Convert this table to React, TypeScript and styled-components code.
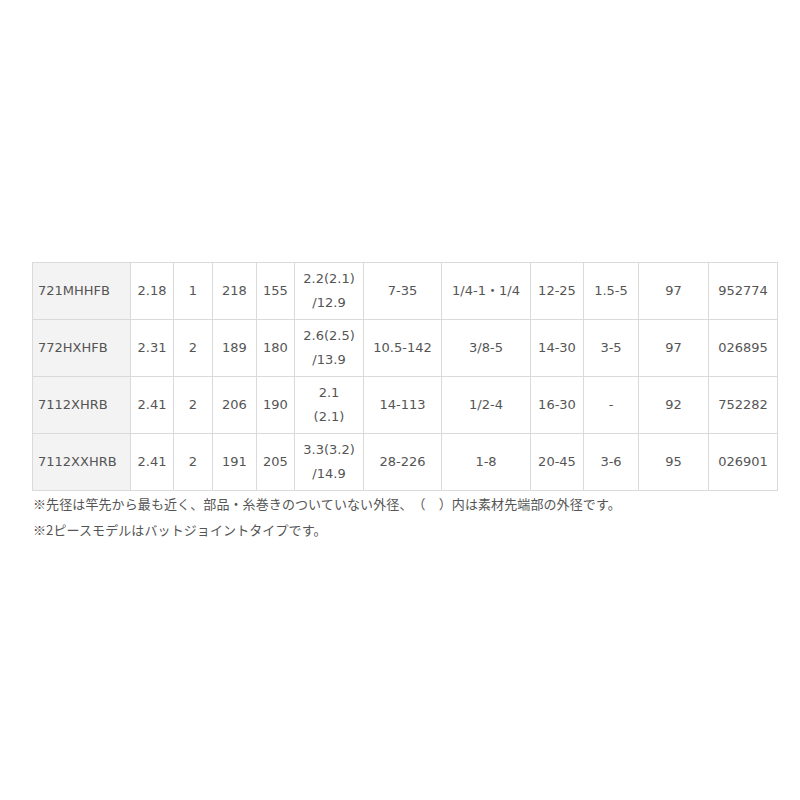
import React from 'react';
import styled, {createGlobalStyle} from 'styled-components';

type SpecRow = {
  model: string;
  cells: string[][];
};

const colWidths = [98, 43, 39, 44, 38, 69, 78, 89, 53, 55, 70, 69];

const rows: SpecRow[] = [
  {
    model: '721MHHFB',
    cells: [['2.18'], ['1'], ['218'], ['155'], ['2.2(2.1)', '/12.9'], ['7-35'], ['1/4-1・1/4'], ['12-25'], ['1.5-5'], ['97'], ['952774']],
  },
  {
    model: '772HXHFB',
    cells: [['2.31'], ['2'], ['189'], ['180'], ['2.6(2.5)', '/13.9'], ['10.5-142'], ['3/8-5'], ['14-30'], ['3-5'], ['97'], ['026895']],
  },
  {
    model: '7112XHRB',
    cells: [['2.41'], ['2'], ['206'], ['190'], ['2.1', '(2.1)'], ['14-113'], ['1/2-4'], ['16-30'], ['-'], ['92'], ['752282']],
  },
  {
    model: '7112XXHRB',
    cells: [['2.41'], ['2'], ['191'], ['205'], ['3.3(3.2)', '/14.9'], ['28-226'], ['1-8'], ['20-45'], ['3-6'], ['95'], ['026901']],
  },
];

const notes = [
  '※先径は竿先から最も近く、部品・糸巻きのついていない外径、（　）内は素材先端部の外径です。',
  '※2ピースモデルはバットジョイントタイプです。',
];

const GlobalStyle = createGlobalStyle`
  html, body {
    margin: 0;
    padding: 0;
    background: #ffffff;
  }
  body {
    font-family: "DejaVu Sans", "Noto Sans CJK JP", sans-serif;
    color: #555555;
  }
`;

function App() {
  return (
    <>
      <GlobalStyle />
      <Page.Wrapper>
        <Spec.Table>
          <colgroup>
            {colWidths.map((w, i) => (
              <col key={i} style={{width: w}} />
            ))}
          </colgroup>
          <tbody>
            {rows.map((row) => (
              <tr key={row.model}>
                <Spec.Model>{row.model}</Spec.Model>
                {row.cells.map((lines, i) => (
                  <Spec.Cell key={i}>
                    {lines.map((line, j) => (
                      <Spec.Line key={j}>{line}</Spec.Line>
                    ))}
                  </Spec.Cell>
                ))}
              </tr>
            ))}
          </tbody>
        </Spec.Table>
        <Page.Notes>
          {notes.map((note) => (
            <Page.Note key={note}>{note}</Page.Note>
          ))}
        </Page.Notes>
      </Page.Wrapper>
    </>
  );
}

export default App;

const Page = {
  Wrapper: styled.div`
    width: 800px;
    height: 800px;
    box-sizing: border-box;
    padding: 262px 0 0 32px;
  `,
  Notes: styled.div`
    display: flex;
    flex-direction: column;
    padding-left: 1px;
  `,
  Note: styled.p`
    margin: 0;
    font-family: "Noto Sans CJK JP", "DejaVu Sans", sans-serif;
    font-size: 13px;
    line-height: 26px;
    letter-spacing: 0.1px;
    text-spacing-trim: space-all;
    color: #555555;
    white-space: nowrap;
  `,
};

const Spec = {
  Table: styled.table`
    width: 746px;
    table-layout: fixed;
    border-collapse: collapse;
    font-size: 13px;
    line-height: 24px;
  `,
  Model: styled.td`
    padding: 4px 0 4px 5px;
    border: 1px solid #dadada;
    background: #f3f3f3;
    text-align: left;
    white-space: nowrap;
    overflow: hidden;
  `,
  Cell: styled.td`
    padding: 4px 0;
    border: 1px solid #dadada;
    text-align: center;
    white-space: nowrap;
  `,
  Line: styled.div`
    height: 24px;
  `,
};
